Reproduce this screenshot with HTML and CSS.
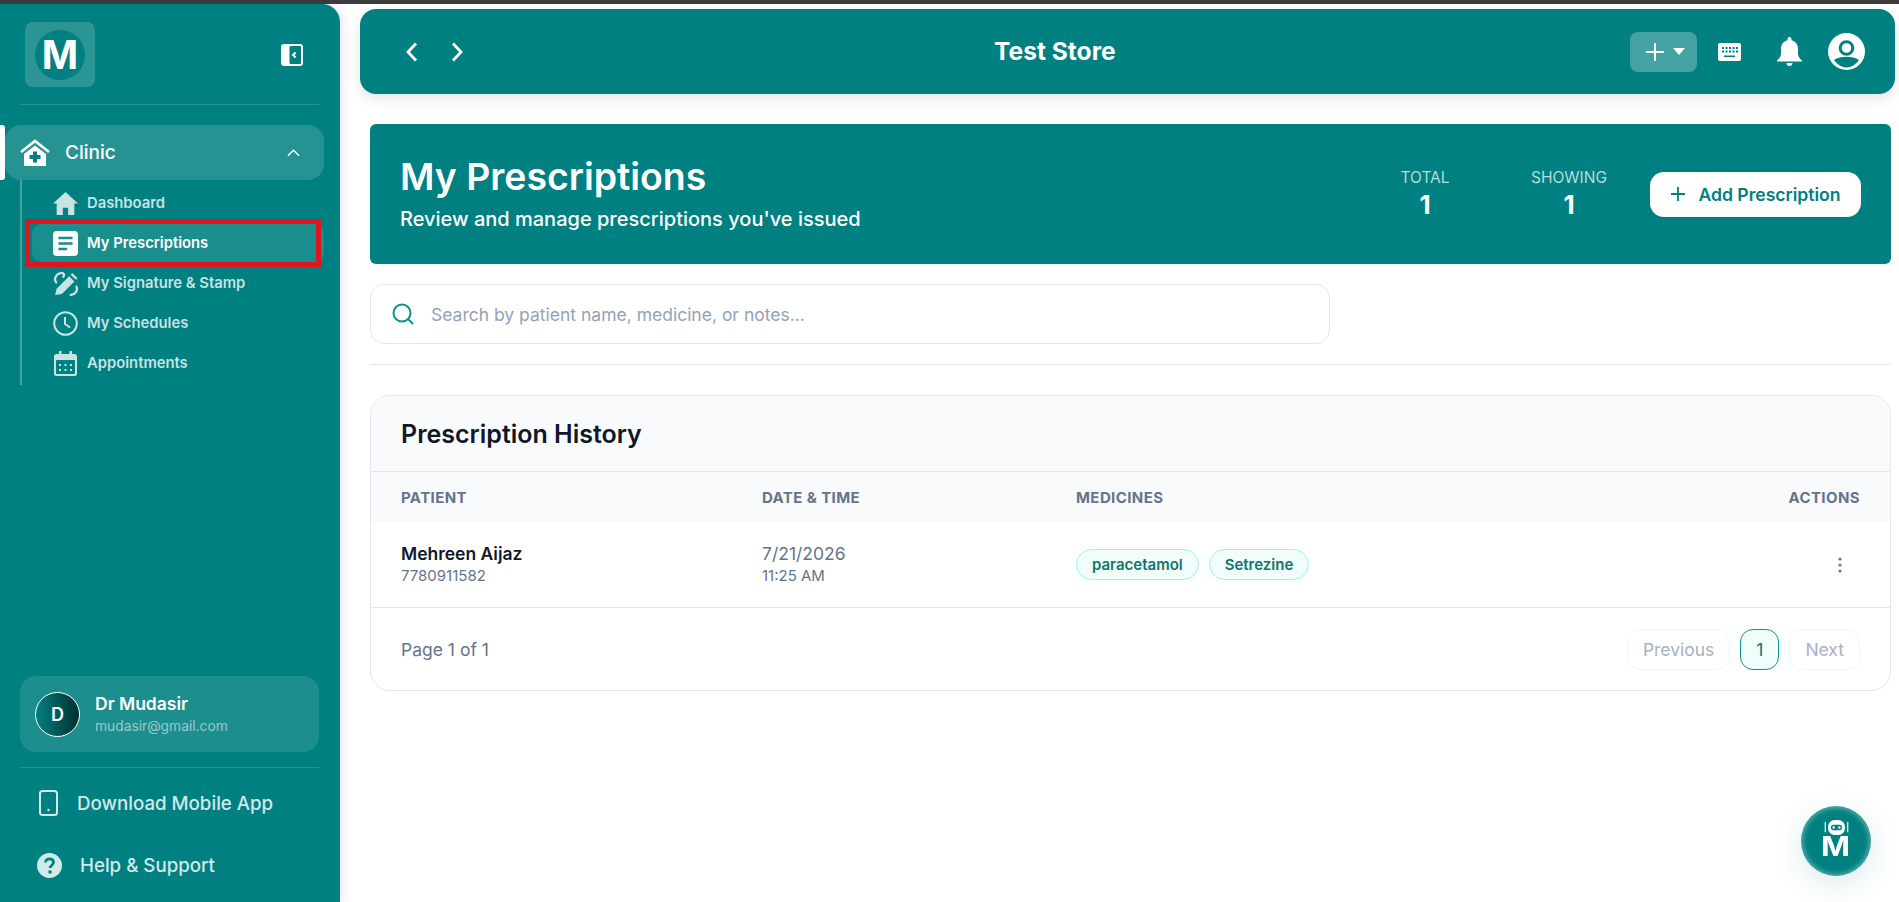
FILE: index.html
```html
<!DOCTYPE html>
<html lang="en">
<head>
  <meta charset="UTF-8" />
  <title>My Prescriptions</title>
  <meta name="viewport" content="width=device-width, initial-scale=1" />
  <link rel="stylesheet" href="styles.css">
</head>
<body>
  <div class="top-strip"></div>
  <div class="app">
    <aside class="sidebar">
      <div class="sidebar-top">
        <div class="logo-box"><div class="logo-circle">M</div></div>
        <svg class="collapse-icon" viewBox="0 0 22 22"><rect width="22" height="22" rx="3" fill="#fff"/><rect x="8.5" y="2" width="11.5" height="18" rx="1" fill="#008080"/><path d="M14.6 8.6 12 11l2.6 2.4" fill="none" stroke="#fff" stroke-width="2"/></svg>
      </div>
      <div class="sidebar-line"></div>

      <div class="nav-group">
        <div class="nav-marker"></div>
        <div class="nav-parent">
          <svg class="nav-parent-icon" viewBox="0 0 30 27"><path d="M1 13 15 2l14 11" fill="none" stroke="#fff" stroke-width="2.6"/><path d="M4 15 15 6.5 26 15v12H4z" fill="#fff"/><path d="M13 12.500h4V16h3.500v4H17v3.500h-4V20H9.500v-4H13z" fill="#008080"/></svg>
          <span>Clinic</span>
          <svg class="chevron-up" viewBox="0 0 14 8"><path d="M1 7l6-6 6 6" fill="none" stroke="#fff" stroke-width="1.500"/></svg>
        </div>
      </div>

      <div class="submenu">
        <a class="submenu-item">
          <svg viewBox="0 0 24 22"><path d="M12 0 0 11h3.500v11H9.500v-7h5v7h6V11H24z" fill="currentColor"/></svg>
          Dashboard
        </a>
        <a class="submenu-item active">
          <svg viewBox="0 0 23 23"><rect width="23" height="23" rx="3.500" fill="currentColor"/><path d="M5 6.500h13M5 11.500h13M5 16.500h8" stroke="#1a8c8c" stroke-width="2.400"/></svg>
          My Prescriptions
          <span class="red-box"></span>
        </a>
        <a class="submenu-item">
          <svg viewBox="0 0 24 24"><path d="M2 23 3.500 17 15.500 5l5 5L8.500 22z" fill="currentColor"/><path d="M17 3.500 18.500 2l5 5L22 8.500z" fill="currentColor"/><path d="M3 11C.5 7.500 3 3 7 2c3-.7 4.500 1.500 3 3.500M22.500 15c1.500 3.500-.5 7-5.500 8" fill="none" stroke="currentColor" stroke-width="2.200" stroke-linecap="round"/></svg>
          My Signature &amp; Stamp
        </a>
        <a class="submenu-item">
          <svg viewBox="0 0 25 25"><circle cx="12.500" cy="12.500" r="11.300" fill="none" stroke="currentColor" stroke-width="2"/><path d="M12 6v7l5 3.500" fill="none" stroke="currentColor" stroke-width="2"/></svg>
          My Schedules
        </a>
        <a class="submenu-item">
          <svg viewBox="0 0 23 25"><path d="M5 0h2.500v3h8V0H18v3h2.500A2.500 2.500 0 0 1 23 5.500V22.500A2.500 2.500 0 0 1 20.500 25h-18A2.500 2.500 0 0 1 0 22.500V5.500A2.500 2.500 0 0 1 2.500 3H5z" fill="currentColor"/><rect x="2" y="9" width="19" height="14" rx="1" fill="#008080"/><path d="M5 13h2v2H5zM10.500 13h2v2h-2zM16 13h2v2h-2zM5 18h2v2H5zM10.500 18h2v2h-2zM16 18h2v2h-2z" fill="currentColor"/></svg>
          Appointments
        </a>
      </div>

      <div class="sidebar-bottom">
        <div class="user-card">
          <div class="user-avatar">D</div>
          <div>
            <div class="user-name">Dr Mudasir</div>
            <div class="user-email">mudasir@gmail.com</div>
          </div>
        </div>
        <div class="sidebar-line"></div>
        <a class="bottom-link link-app">
          <svg viewBox="0 0 19 26"><rect x="1" y="1" width="17" height="24" rx="2.500" fill="none" stroke="currentColor" stroke-width="2"/><circle cx="9.500" cy="20" r="1.200" fill="currentColor"/></svg>
          Download Mobile App
        </a>
        <a class="bottom-link link-help">
          <svg viewBox="0 0 25 25"><circle cx="12.500" cy="12.500" r="12.500" fill="currentColor"/><path d="M8.500 9.500c0-2.500 1.800-3.700 4-3.700s4 1.300 4 3.400c0 3-3.400 3-3.400 5.800" fill="none" stroke="#008080" stroke-width="2.800"/><circle cx="13" cy="19" r="1.800" fill="#008080"/></svg>
          Help &amp; Support
        </a>
      </div>
    </aside>

    <main class="main">
      <header class="topbar">
        <div class="topbar-arrows">
          <svg viewBox="0 0 12 20"><path d="M10 1.500 2 10l8 8.500" fill="none" stroke="#fff" stroke-width="2.800"/></svg>
          <svg viewBox="0 0 12 20"><path d="M2 1.500 10 10l-8 8.500" fill="none" stroke="#fff" stroke-width="2.800"/></svg>
        </div>
        <h1 class="store-name">Test Store</h1>
        <div class="topbar-actions">
          <button class="quick-add">
            <svg class="quick-plus" viewBox="0 0 18 18"><path d="M9 0v18M0 9h18" stroke="#fff" stroke-width="2"/></svg>
            <svg class="quick-caret" viewBox="0 0 12 7"><path d="M0 0h12L6 7z" fill="#fff"/></svg>
          </button>
          <svg class="kbd-icon" viewBox="0 0 23 18"><rect width="23" height="18" rx="2" fill="#fff"/><path d="M4 4h2v2H4zM7.500 4h2v2h-2zM11 4h2v2h-2zM14.500 4h2v2h-2zM18 4h2v2h-2zM4 7.500h2v2H4zM7.500 7.500h2v2h-2zM11 7.500h2v2h-2zM14.500 7.500h2v2h-2zM18 7.500h2v2h-2zM6 12.500h11v1.500H6z" fill="#008080"/></svg>
          <svg class="bell-icon" viewBox="0 0 25 29"><path d="M12.500 0a2 2 0 0 1 2 2v1.200c4 1 6.500 4.300 6.500 8.300v5c0 2.500 1.500 5 4 7v1H0v-1c2.500-2 4-4.500 4-7v-5c0-4 2.500-7.300 6.500-8.300V2a2 2 0 0 1 2-2z" fill="#fff"/><path d="M9.500 26h6a3 3 0 0 1-6 0z" fill="#fff"/></svg>
          <svg class="account-icon" viewBox="0 0 37 37"><circle cx="18.500" cy="18.500" r="18.500" fill="#fff"/><circle cx="18.500" cy="15" r="6.300" fill="none" stroke="#008080" stroke-width="3"/><path d="M6 27c3-2.500 8-3.300 12.500-3.300s9.500.8 12.500 3.300c-3 4.500-8 7.500-12.500 7.500S9 31.500 6 27z" fill="#008080"/></svg>
        </div>
      </header>

      <div class="content">
        <section class="banner">
          <div class="banner-text">
            <h2>My Prescriptions</h2>
            <p>Review and manage prescriptions you've issued</p>
          </div>
          <div class="stat stat-total">
            <div class="stat-label">TOTAL</div>
            <div class="stat-value">1</div>
          </div>
          <div class="stat stat-showing">
            <div class="stat-label">SHOWING</div>
            <div class="stat-value">1</div>
          </div>
          <button class="add-btn">
            <svg viewBox="0 0 16 16"><path d="M8 1v14M1 8h14" stroke="#008080" stroke-width="1.800"/></svg>
            Add Prescription
          </button>
        </section>

        <div class="search-box">
          <svg viewBox="0 0 22 22"><circle cx="10" cy="10" r="8.500" fill="none" stroke="#0d9488" stroke-width="2"/><path d="M16.500 16.500 21 21" stroke="#0d9488" stroke-width="2"/></svg>
          <span>Search by patient name, medicine, or notes...</span>
        </div>
        <div class="content-line"></div>

        <section class="history-card">
          <div class="history-title">Prescription History</div>
          <div class="table-row table-head">
            <div>PATIENT</div>
            <div>DATE &amp; TIME</div>
            <div>MEDICINES</div>
            <div>ACTIONS</div>
          </div>
          <div class="table-row table-body">
            <div class="cell-stack">
              <div class="patient-name">Mehreen Aijaz</div>
              <div class="small-line">7780911582</div>
            </div>
            <div class="cell-stack">
              <div class="date-line">7/21/2026</div>
              <div class="small-line">11:25 AM</div>
            </div>
            <div class="pills">
              <span class="pill">paracetamol</span>
              <span class="pill">Setrezine</span>
            </div>
            <svg class="dots" viewBox="0 0 4 16"><circle cx="2" cy="2" r="1.600"/><circle cx="2" cy="8" r="1.600"/><circle cx="2" cy="14" r="1.600"/></svg>
          </div>
          <div class="table-footer">
            <div class="page-info">Page 1 of 1</div>
            <div class="pager">
              <button class="page-btn">Previous</button>
              <button class="page-btn current">1</button>
              <button class="page-btn">Next</button>
            </div>
          </div>
        </section>
      </div>
    </main>
  </div>

  <button class="chat-fab">
    <svg viewBox="0 0 28 16"><path d="M2 2v11M26 2v11" stroke="#fff" stroke-width="1.200"/><rect x="5" y="0" width="18" height="16" rx="7" fill="#fff"/><rect x="8" y="5" width="12" height="6" rx="3" fill="#008080"/><circle cx="11" cy="8" r="1.300" fill="#fff"/><circle cx="17" cy="8" r="1.300" fill="#fff"/></svg>
    <span>M</span>
  </button>
</body>
</html>
```

FILE: styles.css
```css
:root {
  --teal: #008080;
  --line: #e2e8f0;
  --slate: #64748b;
  --ink: #0f172a;
}

* {
  box-sizing: border-box;
}

body {
  margin: 0;
  height: 902px;
  overflow: hidden;
  background: #fff;
  font-family: Inter, "Liberation Sans", sans-serif;
  color: var(--ink);
}

button {
  font-family: inherit;
}

.top-strip {
  height: 4px;
  background: #3c3c3c;
}

.app {
  display: flex;
  height: 898px;
}

/* Sidebar */
.sidebar {
  width: 340px;
  flex-shrink: 0;
  display: flex;
  flex-direction: column;
  background: var(--teal);
  color: #fff;
  border-top-right-radius: 18px;
  box-shadow: 3px 0 10px rgba(30, 30, 90, 0.1);
}

.sidebar-top {
  display: flex;
  align-items: center;
  justify-content: space-between;
  padding: 18px 37px 17px 25px;
}

.logo-box {
  width: 70px;
  height: 65px;
  background: rgba(255, 255, 255, 0.17);
  border-radius: 8px;
  display: flex;
  align-items: center;
  justify-content: center;
}

.logo-circle {
  width: 50px;
  height: 50px;
  border-radius: 50%;
  background: var(--teal);
  display: flex;
  align-items: center;
  justify-content: center;
  font-size: 39px;
  font-weight: 700;
}

.collapse-icon {
  width: 22px;
  height: 22px;
}

.sidebar-line {
  height: 1px;
  margin: 0 21px 0 20px;
  background: rgba(255, 255, 255, 0.15);
}

.nav-group {
  display: flex;
  margin-top: 20px;
  height: 55px;
}

.nav-marker {
  width: 5px;
  background: #fff;
  border-radius: 0 3px 3px 0;
}

.nav-parent {
  width: 319px;
  display: flex;
  align-items: center;
  padding-left: 15px;
  background: rgba(255, 255, 255, 0.15);
  border-radius: 16px;
  font-size: 19px;
  font-weight: 500;
}

.nav-parent-icon {
  width: 30px;
  height: 27px;
  margin-right: 15px;
}

.chevron-up {
  width: 13px;
  height: 8px;
  margin-left: auto;
  margin-right: 24px;
}

.submenu {
  margin-left: 20px;
  width: 304px;
  height: 205px;
  border-left: 2px solid rgba(255, 255, 255, 0.28);
  padding: 4px 0 0 10px;
}

.submenu-item {
  position: relative;
  display: flex;
  align-items: center;
  height: 38px;
  margin-bottom: 2px;
  padding-left: 21px;
  border-radius: 10px;
  font-size: 14.800px;
  font-weight: 600;
  color: rgba(255, 255, 255, 0.78);
}

.submenu-item svg {
  width: 25px;
  height: 25px;
  margin-right: 9px;
}

.submenu-item.active {
  color: #fff;
  background: rgba(255, 255, 255, 0.1);
}

/* red marker drawn over the active row */
.red-box {
  position: absolute;
  left: -7px;
  top: -5px;
  width: 296px;
  height: 48px;
  border: 5px solid #e0151f;
}

.sidebar-bottom {
  margin-top: auto;
}

.user-card {
  margin: 0 21px 15px 20px;
  height: 76px;
  display: flex;
  align-items: center;
  gap: 15px;
  padding-left: 15px;
  background: rgba(255, 255, 255, 0.11);
  border-radius: 16px;
}

.user-avatar {
  width: 45px;
  height: 45px;
  border-radius: 50%;
  border: 1px solid #fff;
  background: linear-gradient(90deg, #008080, #002f2f);
  display: flex;
  align-items: center;
  justify-content: center;
  font-size: 18px;
  font-weight: 600;
}

.user-name {
  font-size: 17.500px;
  font-weight: 600;
  margin-bottom: 4px;
  margin-top: -2px;
}

.user-email {
  font-size: 13.800px;
  color: rgba(255, 255, 255, 0.55);
}

.bottom-link {
  display: flex;
  align-items: center;
  font-size: 18.700px;
  font-weight: 500;
  color: #d2e9e9;
}

.link-app {
  padding-left: 39px;
  margin-top: 22px;
  height: 26px;
}

.link-app svg {
  width: 19px;
  height: 26px;
  margin-right: 19px;
}

.link-help {
  padding-left: 37px;
  margin-top: 36px;
  height: 26px;
  margin-bottom: 24px;
}

.link-help svg {
  width: 25px;
  height: 25px;
  margin-right: 18px;
}

/* Main column */
.main {
  flex: 1;
  min-width: 0;
  display: flex;
  flex-direction: column;
}

.topbar {
  position: relative;
  height: 85px;
  margin: 5px 4px 0 20px;
  background: var(--teal);
  border-radius: 16px;
  box-shadow: 0 5px 14px rgba(0, 0, 0, 0.1);
  display: flex;
  align-items: center;
  justify-content: space-between;
  color: #fff;
}

.topbar-arrows {
  display: flex;
  gap: 33px;
  padding-left: 46px;
}

.topbar-arrows svg {
  width: 12px;
  height: 20px;
}

.store-name {
  position: absolute;
  left: 634px;
  margin: -2px 0 0;
  font-size: 24.600px;
  font-weight: 700;
}

.topbar-actions {
  display: flex;
  align-items: center;
  padding-right: 30px;
}

.quick-add {
  width: 67px;
  height: 40px;
  border: none;
  border-radius: 8px;
  background: rgba(255, 255, 255, 0.27);
  display: flex;
  align-items: center;
  padding-left: 16px;
  margin-right: 21px;
}

.quick-plus {
  width: 18px;
  height: 18px;
  margin-right: 9px;
}

.quick-caret {
  width: 12px;
  height: 7px;
}

.kbd-icon {
  width: 23px;
  height: 18px;
  margin-right: 36px;
}

.bell-icon {
  width: 25px;
  height: 29px;
  margin-right: 26px;
}

.account-icon {
  width: 37px;
  height: 37px;
}

.content {
  padding: 30px 8px 0 30px;
}

.banner {
  height: 140px;
  background: var(--teal);
  border-radius: 6px;
  display: flex;
  align-items: center;
  padding: 0 30px;
  color: #fff;
}

.banner-text {
  flex: 1;
  padding-bottom: 3px;
}

.banner-text h2 {
  margin: 0 0 8px;
  font-size: 37.400px;
  line-height: 44px;
  font-weight: 600;
}

.banner-text p {
  margin: 0;
  font-size: 20px;
  line-height: 24px;
  font-weight: 500;
}

.stat {
  text-align: center;
}

.stat-total {
  width: 60px;
  margin-right: 74px;
}

.stat-showing {
  width: 80px;
  margin-right: 41px;
}

.stat-label {
  font-size: 15.500px;
  line-height: 17px;
  color: #b4dcdc;
}

.stat-value {
  font-size: 26px;
  line-height: 30px;
  font-weight: 700;
  margin-top: 4px;
}

.add-btn {
  width: 211px;
  height: 45px;
  border: none;
  border-radius: 14px;
  background: #fff;
  color: var(--teal);
  font-size: 17.600px;
  font-weight: 600;
  display: flex;
  align-items: center;
  justify-content: center;
  gap: 12px;
}

.add-btn svg {
  width: 16px;
  height: 16px;
}

.search-box {
  margin-top: 20px;
  width: 960px;
  height: 60px;
  border: 1px solid var(--line);
  border-radius: 14px;
  display: flex;
  align-items: center;
  padding-left: 21px;
  gap: 17px;
  font-size: 17.500px;
  color: #94a3b8;
}

.search-box svg {
  width: 22px;
  height: 22px;
}

.search-box span {
  padding-top: 1px;
}

.content-line {
  height: 1px;
  margin-top: 20px;
  background: var(--line);
}

.history-card {
  margin-top: 30px;
  border: 1px solid var(--line);
  border-radius: 20px;
  overflow: hidden;
}

.history-title {
  height: 76px;
  display: flex;
  align-items: center;
  padding-left: 30px;
  background: #f8fafc;
  border-bottom: 1px solid var(--line);
  font-size: 25px;
  font-weight: 600;
}

.table-row {
  display: grid;
  grid-template-columns: 361px 314px 1fr auto;
  align-items: center;
  padding: 0 30px;
}

.table-head {
  height: 50px;
  background: #f8fafc;
  font-size: 15px;
  font-weight: 700;
  letter-spacing: 0.4px;
  color: var(--slate);
}

.table-body {
  height: 86px;
  border-bottom: 1px solid var(--line);
}

.cell-stack {
  padding-top: 1px;
}

.patient-name {
  font-size: 17.500px;
  line-height: 22px;
  font-weight: 600;
}

.date-line {
  font-size: 17.500px;
  line-height: 22px;
  color: var(--slate);
}

.small-line {
  font-size: 15px;
  line-height: 22px;
  color: var(--slate);
}

.pills {
  display: flex;
  gap: 10px;
}

.pill {
  height: 31px;
  display: flex;
  align-items: center;
  padding: 0 15px;
  border: 1px solid #99f6e4;
  border-radius: 16px;
  background: #f0fdfa;
  color: #0f766e;
  font-size: 15px;
  font-weight: 600;
}

.dots {
  width: 4px;
  height: 16px;
  margin-right: 18px;
  fill: var(--slate);
}

.table-footer {
  height: 82px;
  display: flex;
  align-items: center;
  justify-content: space-between;
  padding: 0 30px;
}

.page-info {
  font-size: 17.500px;
  color: var(--slate);
}

.pager {
  display: flex;
  gap: 10px;
}

.page-btn {
  height: 41px;
  padding: 0 15px;
  border: 1px solid #f1f5f9;
  border-radius: 13px;
  background: #fff;
  color: #a8b1bf;
  font-size: 17.500px;
}

.page-btn.current {
  width: 39px;
  padding: 0;
  border-color: #0d9488;
  background: #f0fdfa;
  color: #0f766e;
}

.chat-fab {
  position: fixed;
  left: 1801px;
  top: 806px;
  width: 70px;
  height: 70px;
  padding: 0 0 3px;
  border: none;
  border-radius: 50%;
  background: var(--teal);
  box-shadow: inset 0 0 5px 2px rgba(255, 255, 255, 0.35), 0 8px 30px rgba(0, 128, 128, 0.15);
  display: flex;
  flex-direction: column;
  align-items: center;
  justify-content: center;
  color: #fff;
}

.chat-fab svg {
  width: 27px;
  height: 15px;
}

.chat-fab span {
  font-size: 27px;
  line-height: 24px;
  font-weight: 700;
  transform: scaleX(1.15);
}
```
